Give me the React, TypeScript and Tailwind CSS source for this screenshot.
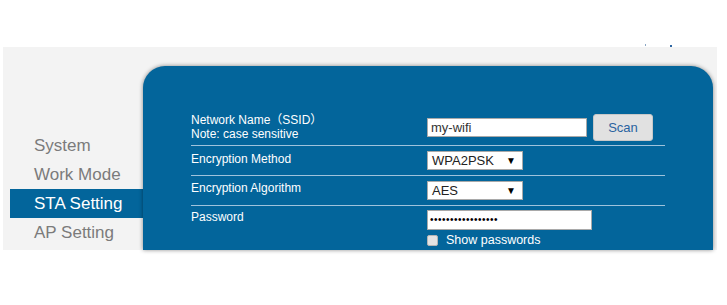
const menu = ["System", "Work Mode", "STA Setting", "AP Setting"];

const SelectBox = ({ value }: { value: string }) => (
  <div className="flex h-[19px] w-[96px] items-center justify-between border border-[#a9a9a9] bg-white pl-[4px] pr-[6px] text-[13px] leading-none text-[#222]">
    <span>{value}</span>
    <span className="text-[10px] text-black">▼</span>
  </div>
);

const Divider = () => <div className="h-px bg-[#9fc3dc]" />;

export default function App() {
  return (
    <div className="h-[305px] w-[727px] overflow-hidden bg-white font-['Liberation_Sans','Noto_Sans_CJK_SC',sans-serif]">
      <div className="flex h-[47px] items-end justify-end pr-[55px]">
        <span className="mb-px mr-[24px] h-[2px] w-px bg-[#8aa6c4]" />
        <span className="h-[2px] w-[2px] bg-[#2d66a3]" />
      </div>

      <div className="ml-[3px] flex h-[203px] w-[714px] bg-[#f3f3f3]">
        <nav className="w-[140px] pl-[7px] pt-[84px]">
          {menu.map((item) => (
            <div
              key={item}
              className={
                item === "STA Setting"
                  ? "flex h-[29px] items-center bg-[#03659b] pl-[24px] text-[17px] text-white"
                  : "flex h-[29px] items-center pl-[24px] text-[17px] text-[#7b7b7b]"
              }
            >
              {item}
            </div>
          ))}
        </nav>

        <section className="mt-[19px] mr-[4px] flex-1 rounded-t-[22px] bg-[#03659b] px-[48px] pt-[46px] text-[12px] leading-[14px] text-white shadow-[0_0_4px_rgba(0,0,0,0.45)]">
          <div className="grid h-[33px] grid-cols-[236px_1fr]">
            <div className="pt-px">
              <div>Network Name（SSID）</div>
              <div>Note: case sensitive</div>
            </div>
            <div className="flex items-start gap-[6px] pt-[2px]">
              <div className="mt-[4px] flex h-[19px] w-[160px] items-center border border-[#a9a9a9] bg-white px-[3px] text-[13px] text-[#333]">
                my-wifi
              </div>
              <button className="h-[27px] w-[60px] rounded-[3px] border border-[#c8c8c8] bg-[#e1e1e1] text-[13px] text-[#2a63a0]">
                Scan
              </button>
            </div>
          </div>
          <Divider />

          <div className="grid h-[29px] grid-cols-[236px_1fr]">
            <div className="pt-[6px]">Encryption Method</div>
            <div className="flex items-center">
              <SelectBox value="WPA2PSK" />
            </div>
          </div>
          <Divider />

          <div className="grid h-[29px] grid-cols-[236px_1fr]">
            <div className="pt-[5px]">Encryption Algorithm</div>
            <div className="flex items-center">
              <SelectBox value="AES" />
            </div>
          </div>
          <Divider />

          <div className="grid grid-cols-[236px_1fr]">
            <div className="pt-[4px]">Password</div>
            <div className="pt-[4px]">
              <div className="flex h-[20px] w-[165px] items-center border border-[#a9a9a9] bg-white px-[2px] text-[10px] tracking-[0.5px] text-black">
                •••••••••••••••••
              </div>
              <div className="mt-[3px] flex items-center gap-[8px]">
                <span className="h-[11px] w-[11px] rounded-[2px] border border-[#b5b5b5] bg-[#e3e3e3]" />
                <span className="text-[12.5px]">Show passwords</span>
              </div>
            </div>
          </div>
        </section>
      </div>
    </div>
  );
}
